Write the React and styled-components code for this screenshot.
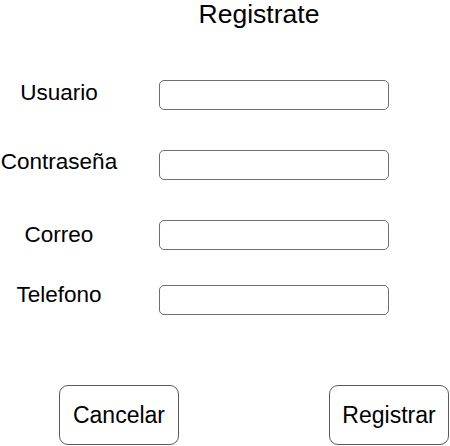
import React from 'react';
import styled, { createGlobalStyle } from 'styled-components';

const GlobalStyle = createGlobalStyle`
  html, body {
    margin: 0;
    padding: 0;
    background: #fff;
  }
  body {
    font-family: "Liberation Sans", Arial, Helvetica, sans-serif;
    color: #000;
  }
`;

const Page = styled.div`
  width: 450px;
  height: 446px;
  overflow: hidden;
  display: flex;
  flex-direction: column;
`;

const Title = styled.h1`
  margin: -1px 0 0 0;
  padding-left: 68px;
  font-size: 26.5px;
  line-height: 30px;
  font-weight: normal;
  text-align: center;
`;

const Row = styled.div`
  display: grid;
  grid-template-columns: 118px 230px;
  column-gap: 41px;
  align-items: start;
  margin-top: ${(p) => p.$top}px;
`;

const Label = styled.label`
  font-size: 22.5px;
  line-height: 25px;
  text-align: center;
  white-space: nowrap;
  margin-top: ${(p) => p.$drop || 0}px;
`;

const Input = styled.input`
  box-sizing: border-box;
  width: 230px;
  height: 30px;
  margin: ${(p) => p.$drop || 0}px 0 0 0;
  padding: 0 6px;
  border: 1px solid #6e6e6e;
  border-radius: 5px;
  background: #fff;
  font-family: inherit;
  font-size: 16px;
  outline: none;
`;

const Actions = styled.div`
  display: flex;
  gap: 150px;
  padding-left: 59px;
  margin-top: 70px;
`;

const Button = styled.button`
  box-sizing: border-box;
  width: 120px;
  height: 60px;
  border: 1px solid #5a5a5a;
  border-radius: 9px;
  background: #fff;
  color: #000;
  font-family: inherit;
  font-size: 23px;
  padding: 0;
  cursor: pointer;
`;

const fields = [
  { label: 'Usuario', top: 51, labelDrop: 0, inputDrop: 0 },
  { label: 'Contraseña', top: 39, labelDrop: 0, inputDrop: 1, type: 'password' },
  { label: 'Correo', top: 40, labelDrop: 2, inputDrop: 0, type: 'email' },
  { label: 'Telefono', top: 32, labelDrop: 0, inputDrop: 3, type: 'tel' },
];

const App = () => (
  <Page>
    <GlobalStyle />
    <Title>Registrate</Title>
    {fields.map((f) => (
      <Row key={f.label} $top={f.top}>
        <Label htmlFor={f.label} $drop={f.labelDrop}>{f.label}</Label>
        <Input id={f.label} type={f.type || 'text'} $drop={f.inputDrop} />
      </Row>
    ))}
    <Actions>
      <Button type="button">Cancelar</Button>
      <Button type="submit">Registrar</Button>
    </Actions>
  </Page>
);

export default App;
